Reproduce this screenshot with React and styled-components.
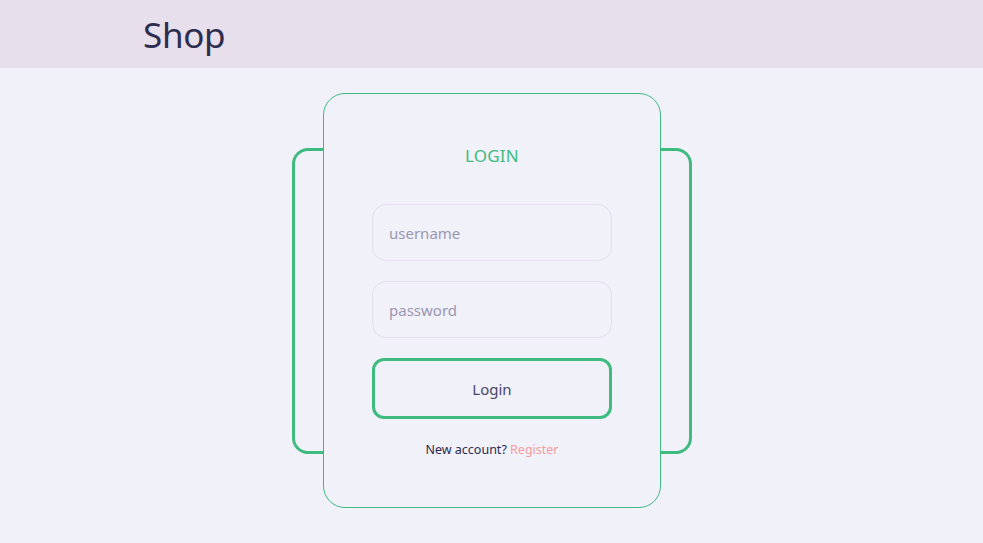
import React from "react";
import styled, { createGlobalStyle } from "styled-components";

const GlobalStyle = createGlobalStyle`
  html, body {
    margin: 0;
    padding: 0;
    background: #f1f1fa;
    font-family: "Noto Sans", "Open Sans", sans-serif;
    color: #2c2a4a;
  }
  * { box-sizing: border-box; }
`;

const Header = styled.header`
  height: 68px;
  background: #e7dfec;
  display: flex;
  align-items: center;
  padding-left: 143px;
`;

const Brand = styled.h1`
  margin: 0;
  font-size: 35px;
  font-weight: 400;
  color: #2e2d50;
  letter-spacing: -0.3px;
`;

const Main = styled.main`
  display: flex;
  justify-content: center;
  padding-top: 25px;
`;

const Stage = styled.div`
  display: grid;
  place-items: center;
  margin-left: 1px;
`;

const Frame = styled.div`
  grid-area: 1 / 1;
  width: 400px;
  height: 306px;
  border: 3px solid #3fbb80;
  border-radius: 16px;
`;

const Card = styled.form`
  grid-area: 1 / 1;
  width: 338px;
  height: 415px;
  background: #f1f1fa;
  border: 1px solid #3fbb80;
  border-radius: 22px;
  display: flex;
  flex-direction: column;
  align-items: center;
  padding-top: 50px;
`;

const Title = styled.h2`
  margin: 0 0 37px;
  font-size: 17px;
  font-weight: 400;
  color: #3fbb80;
  letter-spacing: 0.2px;
`;

const Input = styled.input`
  width: 240px;
  height: 57px;
  border: 1px solid #e4deee;
  border-radius: 14px;
  background: #f1f1fa;
  padding: 0 16px;
  font-family: inherit;
  font-size: 15px;
  color: #2c2a4a;
  outline: none;
  margin-bottom: 20px;
  &::placeholder {
    color: #9a97b0;
  }
`;

const Button = styled.button`
  width: 240px;
  height: 61px;
  border: 3px solid #3fbb80;
  border-radius: 12px;
  background: #f1f1fa;
  font-family: inherit;
  font-size: 15px;
  color: #4a4668;
  cursor: pointer;
`;

const Footer = styled.p`
  margin: 22px 0 0;
  font-size: 12.5px;
  color: #2c2a4a;
`;

const Link = styled.a`
  color: #f59c9c;
  text-decoration: none;
`;

const App = () => {
  return (
    <>
      <GlobalStyle />
      <Header>
        <Brand>Shop</Brand>
      </Header>
      <Main>
        <Stage>
          <Frame />
          <Card onSubmit={(e) => e.preventDefault()}>
            <Title>LOGIN</Title>
            <Input placeholder="username" />
            <Input type="password" placeholder="password" />
            <Button type="submit">Login</Button>
            <Footer>
              New account? <Link href="#">Register</Link>
            </Footer>
          </Card>
        </Stage>
      </Main>
    </>
  );
};

export default App;
